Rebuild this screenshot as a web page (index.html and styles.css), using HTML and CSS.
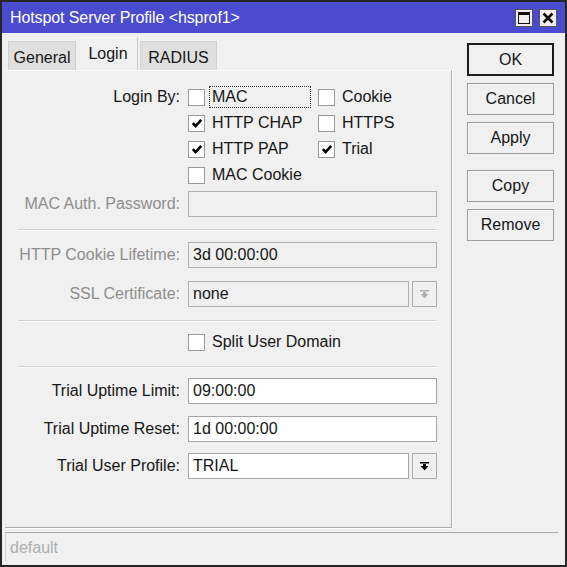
FILE: index.html
```html
<!DOCTYPE html>
<html>
<head>
<meta charset="utf-8">
<link rel="stylesheet" href="styles.css">
</head>
<body>
<div class="window">
  <div class="titlebar">
    <span class="title">Hotspot Server Profile &lt;hsprof1&gt;</span>
    <div class="winbtns">
      <span class="wbtn"><svg width="16" height="16" viewBox="0 0 16 16"><rect x="2.5" y="2.5" width="11" height="11" fill="none" stroke="#111" stroke-width="1"/><rect x="2" y="2" width="12" height="3" fill="#111"/></svg></span>
      <span class="wbtn"><svg width="16" height="16" viewBox="0 0 16 16"><path d="M3.5 3.5 L12.5 12.5 M12.5 3.5 L3.5 12.5" stroke="#111" stroke-width="2.6"/></svg></span>
    </div>
  </div>
  <div class="content">
    <div class="left">
      <div class="tabs">
        <div class="tab tab-general">General</div>
        <div class="tab tab-login active">Login</div>
        <div class="tab tab-radius">RADIUS</div>
      </div>
      <div class="panel">
        <div class="checks">
          <div class="label lb-login">Login By:</div>
          <div class="checkgrid">
            <div class="cb"><span class="box"></span><span class="cbtext focus">MAC</span></div>
            <div class="cb"><span class="box"></span><span class="cbtext">Cookie</span></div>
            <div class="cb"><span class="box checked"><svg width="12" height="12" viewBox="0 0 12 12"><path d="M1.8 6.2 L4.6 9 L10.2 2.8" fill="none" stroke="#000" stroke-width="2.6"/></svg></span><span class="cbtext">HTTP CHAP</span></div>
            <div class="cb"><span class="box"></span><span class="cbtext">HTTPS</span></div>
            <div class="cb"><span class="box checked"><svg width="12" height="12" viewBox="0 0 12 12"><path d="M1.8 6.2 L4.6 9 L10.2 2.8" fill="none" stroke="#000" stroke-width="2.6"/></svg></span><span class="cbtext">HTTP PAP</span></div>
            <div class="cb"><span class="box checked"><svg width="12" height="12" viewBox="0 0 12 12"><path d="M1.8 6.2 L4.6 9 L10.2 2.8" fill="none" stroke="#000" stroke-width="2.6"/></svg></span><span class="cbtext">Trial</span></div>
            <div class="cb"><span class="box"></span><span class="cbtext">MAC Cookie</span></div>
          </div>
        </div>

        <div class="row r-macpw">
          <div class="label disabled">MAC Auth. Password:</div>
          <div class="input dis"></div>
        </div>
        <div class="sep s1"></div>
        <div class="row r-cookie">
          <div class="label disabled">HTTP Cookie Lifetime:</div>
          <div class="input dis">3d 00:00:00</div>
        </div>
        <div class="row r-ssl">
          <div class="label disabled">SSL Certificate:</div>
          <div class="input dis short">none</div>
          <div class="ddbtn"><svg width="11" height="11" viewBox="0 0 11 11"><rect x="1" y="1" width="9" height="1.5" fill="#b0b0b0"/><path d="M1.5 5 H9.5 L5.5 9.5 Z" fill="#b0b0b0"/><rect x="4" y="3" width="3" height="2.5" fill="#b0b0b0"/></svg></div>
        </div>
        <div class="sep s2"></div>
        <div class="row r-split">
          <div class="label"></div>
          <div class="cb"><span class="box"></span><span class="cbtext">Split User Domain</span></div>
        </div>
        <div class="sep s3"></div>
        <div class="row r-limit">
          <div class="label">Trial Uptime Limit:</div>
          <div class="input">09:00:00</div>
        </div>
        <div class="row r-reset">
          <div class="label">Trial Uptime Reset:</div>
          <div class="input">1d 00:00:00</div>
        </div>
        <div class="row r-profile">
          <div class="label">Trial User Profile:</div>
          <div class="input short">TRIAL</div>
          <div class="ddbtn"><svg width="11" height="11" viewBox="0 0 11 11"><rect x="1" y="1" width="9" height="1.5" fill="#000"/><path d="M1.5 5 H9.5 L5.5 9.5 Z" fill="#000"/><rect x="4" y="3" width="3" height="2.5" fill="#000"/></svg></div>
        </div>
      </div>
    </div>
    <div class="buttons">
      <div class="btn default">OK</div>
      <div class="btn">Cancel</div>
      <div class="btn">Apply</div>
      <div class="btn gap">Copy</div>
      <div class="btn">Remove</div>
    </div>
  </div>
  <div class="status"><span>default</span></div>
</div>
</body>
</html>
```
FILE: styles.css
```css
* { box-sizing: border-box; }
html, body { margin: 0; padding: 0; background: #f0f0f0; }
.window {
  width: 567px; height: 567px;
  border: 2px solid #262626;
  background: #f0f0f0;
  display: flex; flex-direction: column;
  font-family: "Liberation Sans", Arial, sans-serif;
  font-size: 16px;
  color: #161616;
}
.titlebar {
  height: 31px; flex: none;
  background: #4a4bce;
  color: #fff;
  display: flex; align-items: center;
  padding: 0 8px 0 8px;
}
.title { letter-spacing: -0.1px; }
.winbtns { margin-left: auto; display: flex; gap: 6px; }
.wbtn {
  width: 18px; height: 18px;
  background: #f0f0f0;
  border: 1px solid #555;
  display: flex; align-items: center; justify-content: center;
}
.content { height: 495px; flex: none; display: flex; padding: 4px 0 0 3px; }
.left { width: 447px; display: flex; flex-direction: column; }
.tabs { height: 33px; display: flex; align-items: flex-end; padding-left: 3px; gap: 2px; flex: none; }
.tab {
  height: 29px; display: flex; align-items: center; justify-content: center;
  background: #dfdfdf; border: 1px solid #d2d2d2; border-bottom: none;
  padding-top: 3px;
}
.tab-general { width: 68px; }
.tab-login { width: 60px; }
.tab-radius { width: 77px; }
.tab.active { height: 33px; background: #f0f0f0; border-color: #f0f0f0; border-right: 1px solid #c8c8c8; border-top: 1px solid #fafafa; padding-top: 0; padding-bottom: 1px; }
.panel {
  flex: 1;
  border-top: 1px solid #fbfbfb;
  border-right: 1px solid #a9a9a9;
  border-bottom: 1px solid #a9a9a9;
  box-shadow: 1px 1px 0 #fdfdfd;
  display: flex; flex-direction: column;
  padding-top: 13px;
}
.label { width: 175px; flex: none; text-align: right; margin-right: 8px; white-space: nowrap; }
.label.disabled { color: #8d8d8d; }
.checks { display: flex; }
.lb-login { height: 26px; line-height: 26px; }
.checkgrid { display: grid; grid-template-columns: 130px 120px; grid-auto-rows: 26px; }
.cb { display: flex; align-items: center; }
.box {
  width: 17px; height: 17px; flex: none;
  background: #fff; border: 1px solid #9a9a9a;
  display: flex; align-items: center; justify-content: center;
  margin-right: 7px;
}
.cbtext { line-height: 20px; padding: 0 2px; margin-left: -2px; }
.cbtext.focus { outline: 1px dotted #333; outline-offset: 0; width: 100px; padding-left: 2px; }
.row { display: flex; align-items: center; height: 26px; flex: none; }
.input {
  width: 249px; height: 26px;
  background: #fff; border: 1px solid #a5a5a5;
  padding: 0 4px; line-height: 24px;
  white-space: nowrap;
}
.input.dis { background: #f0f0f0; border-color: #b0b0b0; }
.input.short { width: 221px; }
.ddbtn {
  width: 25px; height: 26px; margin-left: 3px;
  border: 1px solid #aaa; background: #f0f0f0;
  display: flex; align-items: center; justify-content: center;
}
.sep { height: 2px; flex: none; margin-left: 13px; width: 419px; border-top: 1px solid #d2d2d2; border-bottom: 1px solid #fcfcfc; }
.r-macpw { margin-top: 3px; }
.s1 { margin-top: 12px; }
.r-cookie { margin-top: 11px; }
.r-ssl { margin-top: 13px; }
.s2 { margin-top: 13px; }
.r-split { margin-top: 7px; }
.s3 { margin-top: 11px; }
.r-limit { margin-top: 10px; }
.r-reset { margin-top: 12px; }
.r-profile { margin-top: 11px; }
.buttons { margin-left: 15px; padding-top: 6px; display: flex; flex-direction: column; gap: 7px; }
.btn {
  width: 87px; height: 32px;
  border: 1px solid #9b9b9b; background: #f0f0f0;
  box-shadow: inset 1px 1px 0 #fbfbfb;
  display: flex; align-items: center; justify-content: center;
}
.btn.default { height: 33px; border: 2px solid #1c1c1c; box-shadow: none; }
.btn.gap { margin-top: 9px; }
.status {
  height: 30px; flex: none;
  margin: 4px 7px 0 3px;
  border-top: 1px solid #a9a9a9;
  border-left: 1px solid #d0d0d0;
  display: flex; align-items: center;
  padding-left: 4px;
  color: #adadad;
}
```
